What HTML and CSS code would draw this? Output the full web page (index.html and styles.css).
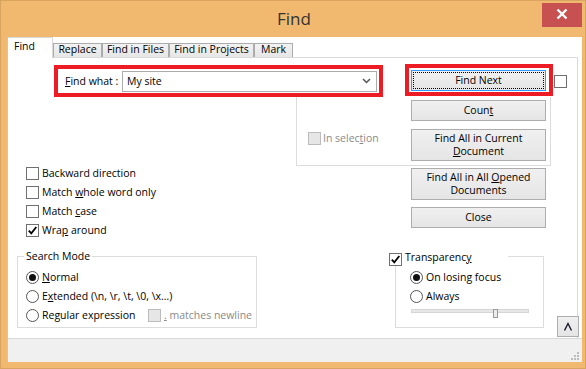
FILE: index.html
```html
<!DOCTYPE html>
<html lang="en">
<head>
<meta charset="utf-8">
<title>Find</title>
<link rel="stylesheet" href="styles.css">
</head>
<body>
<div class="window">
  <div class="titlebar">
    <div class="title">Find</div>
    <div class="close">
      <svg width="40" height="24" viewBox="0 0 40 24"><path d="M15.5 6.5 L24.5 15.5 M24.5 6.5 L15.5 15.5" stroke="#fff" stroke-width="2.4" fill="none"/></svg>
    </div>
  </div>
  <div class="client">
    <div class="tabs">
      <div class="tab active">Find</div>
      <div class="tab w-replace">Replace</div>
      <div class="tab w-files">Find in Files</div>
      <div class="tab w-projects">Find in Projects</div>
      <div class="tab w-mark">Mark</div>
    </div>
    <div class="panel">
      <div class="row-a">
        <div class="mark mark-what">
          <span class="what-label"><u>F</u>ind what :</span>
          <div class="combo">
            <span>My site</span>
            <svg class="chev" width="9" height="6" viewBox="0 0 9 6"><path d="M1 1 L4.5 4.5 L8 1" stroke="#555" stroke-width="1.5" fill="none"/></svg>
          </div>
        </div>
        <div class="mark mark-next">
          <button class="btn btn-next"><span class="focus-rect">Find Next</span></button>
        </div>
        <span class="cb cb-side"></span>
      </div>
      <div class="sel-group">
        <div class="sel-check"><span class="cb disabled"></span><span class="dim">In selec<u>t</u>ion</span></div>
        <div class="btn-col col-b">
          <button class="btn"><span class="lbl">Coun<u>t</u></span></button>
          <button class="btn tall"><span class="lbl">Find All in Current<br><u>D</u>ocument</span></button>
        </div>
      </div>
      <div class="row-c">
        <div class="checks">
          <div class="check-row"><span class="cb"></span><span>Backward direction</span></div>
          <div class="check-row"><span class="cb"></span><span>Match <u>w</u>hole word only</span></div>
          <div class="check-row"><span class="cb"></span><span>Match <u>c</u>ase</span></div>
          <div class="check-row"><span class="cb"><svg width="11" height="11" viewBox="0 0 11 11"><path d="M1.8 5.6 L4.3 8.3 L9.3 2" stroke="#000" stroke-width="1.8" fill="none"/></svg></span><span>Wra<u>p</u> around</span></div>
        </div>
        <div class="btn-col col-c">
          <button class="btn tall"><span class="lbl">Find All in All <u>O</u>pened<br>Documents</span></button>
          <button class="btn"><span class="lbl">Close</span></button>
        </div>
      </div>
      <div class="row-d">
        <fieldset class="group mode">
          <legend>Search Mode</legend>
          <div class="mode-body">
            <div class="radio-row"><span class="radio on"></span><span><u>N</u>ormal</span></div>
            <div class="radio-row"><span class="radio"></span><span>E<u>x</u>tended (\n, \r, \t, \0, \x…)</span></div>
            <div class="radio-row"><span class="radio"></span><span class="regex-label">Re<u>g</u>ular expression</span><span class="cb disabled"></span><span class="dim"><u>.</u> matches newline</span></div>
          </div>
        </fieldset>
        <fieldset class="group trans">
          <legend><span class="cb"><svg width="11" height="11" viewBox="0 0 11 11"><path d="M1.8 5.6 L4.3 8.3 L9.3 2" stroke="#000" stroke-width="1.8" fill="none"/></svg></span><span class="trans-label">Transparenc<u>y</u></span></legend>
          <div class="trans-body">
            <div class="radio-row"><span class="radio on"></span><span>On losing focus</span></div>
            <div class="radio-row"><span class="radio"></span><span>Always</span></div>
            <div class="slider"><div class="track"></div><div class="thumb"></div></div>
          </div>
        </fieldset>
        <button class="btn up"><svg width="20" height="19" viewBox="0 0 20 19"><path d="M6.5 13.5 L10 6.5 L13.5 13.5" stroke="#1b1b2e" stroke-width="1.4" fill="none"/></svg></button>
      </div>
    </div>
    <div class="status">
      <svg class="grip" width="10" height="10" viewBox="0 0 10 10"><g fill="#bdbdbd"><rect x="7" y="1" width="2" height="2"/><rect x="4" y="4" width="2" height="2"/><rect x="7" y="4" width="2" height="2"/><rect x="1" y="7" width="2" height="2"/><rect x="4" y="7" width="2" height="2"/><rect x="7" y="7" width="2" height="2"/></g></svg>
    </div>
  </div>
</div>
</body>
</html>
```

FILE: styles.css
```css
* { box-sizing: border-box; }
html, body { margin: 0; padding: 0; }
body {
  width: 586px;
  height: 369px;
  overflow: hidden;
  font-family: "Open Sans", "Noto Sans", sans-serif;
  font-size: 10.5px;
  line-height: 13px;
  color: #000;
}
u { text-underline-offset: 1px; }

.window {
  width: 586px;
  height: 369px;
  background: #f1b96f;
  box-shadow: inset 0 0 0 1px #d9a45f;
  display: flex;
  flex-direction: column;
}
.titlebar { height: 37px; display: grid; flex: none; }
.title {
  grid-area: 1 / 1;
  text-align: center;
  font-size: 17px;
  line-height: 38px;
  color: #333;
  padding-left: 2px;
}
.close {
  grid-area: 1 / 1;
  justify-self: end;
  align-self: start;
  margin: 3px 4px 0 0;
  width: 40px;
  height: 24px;
  background: #c75050;
}
.close svg { display: block; }

.client {
  margin-left: 7px;
  width: 575px;
  height: 325px;
  border-left: 1px solid #c6c6c6;
  background: #fff;
  display: flex;
  flex-direction: column;
}
.tabs { height: 20px; display: flex; align-items: flex-end; flex: none; }
.tab {
  height: 14px;
  border: 1px solid #acacac;
  border-bottom: none;
  background: linear-gradient(#f2f2f2, #e6e6e6);
  text-align: center;
  line-height: 11px;
  white-space: nowrap;
}
.tab.active {
  position: relative;
  z-index: 1;
  width: 45px;
  height: 21px;
  margin-bottom: -1px;
  border: none;
  border-top: 1px solid #d9d9d9;
  border-right: 1px solid #d9d9d9;
  background: #fff;
  text-align: left;
  padding: 2px 0 0 6px;
  line-height: 13px;
}
.w-replace { width: 49px; }
.w-files { width: 67px; }
.w-projects { width: 85px; }
.w-mark { width: 39px; }

.panel {
  flex: none;
  width: 570px;
  height: 281px;
  border-top: 1px solid #d9d9d9;
  border-right: 1px solid #d9d9d9;
}

/* row A */
.row-a { display: flex; align-items: flex-start; margin-top: 6px; height: 33px; }
.mark { border: 4px solid #ed1c24; flex: none; }
.mark-what {
  margin: 1px 0 0 46px;
  width: 329px;
  height: 32px;
  display: flex;
  align-items: center;
  padding-left: 7px;
}
.what-label { width: 57px; flex: none; }
.combo {
  width: 255px;
  height: 21px;
  border: 1px solid #acacac;
  display: flex;
  align-items: center;
  justify-content: space-between;
  padding: 0 5px 0 4px;
}
.chev { display: block; }
.mark-next { margin-left: 22px; width: 148px; height: 32px; padding: 2px 0 0 2px; }

.cb {
  width: 13px;
  height: 13px;
  border: 1px solid #707070;
  background: #fff;
  display: inline-flex;
  flex: none;
}
.cb svg { display: block; }
.cb.disabled { border-color: #bcbcbc; background: #e6e6e6; }
.cb-side { margin: 11px 0 0 1px; }
.dim { color: #8a8a8a; }

/* buttons */
.btn {
  font: inherit;
  color: #000;
  width: 135px;
  height: 21px;
  border: 1px solid #adadad;
  border-radius: 0;
  background: linear-gradient(#f0f0f0, #e5e5e5);
  padding: 0;
  margin: 0;
  display: flex;
  align-items: center;
  justify-content: center;
  text-align: center;
  line-height: 13px;
  flex: none;
}
.lbl { display: block; text-align: center; }
.btn.tall { height: 32px; }
.btn-next { border-color: #3399ff; padding: 1px; }
.focus-rect {
  align-self: stretch;
  flex: 1;
  border: 1px dotted #000;
  display: flex;
  align-items: center;
  justify-content: center;
}
.btn-col { display: flex; flex-direction: column; flex: none; }

/* selection group */
.sel-group {
  margin-left: 288px;
  width: 255px;
  height: 69px;
  border: 1px solid #dcdcdc;
  border-top: none;
  display: flex;
}
.sel-check {
  width: 114px;
  padding: 35px 0 0 11px;
  display: flex;
  align-items: flex-start;
  gap: 2px;
  flex: none;
}
.col-b { padding-top: 3px; gap: 8px; }

/* row C */
.row-c { display: flex; height: 84px; }
.checks { margin-left: 18px; width: 385px; padding-top: 1px; flex: none; }
.check-row { height: 19px; display: flex; align-items: flex-start; gap: 3px; white-space: nowrap; }
.col-c { padding-top: 2px; gap: 7px; }

/* row D */
.row-d { display: flex; align-items: flex-start; height: 88px; }
.group {
  margin: 0;
  padding: 0;
  border: 1px solid #dcdcdc;
  min-width: 0;
  height: 78px;
  flex: none;
}
.group legend { height: 13px; line-height: 13px; padding: 0; }
.mode { margin-left: 9px; width: 240px; }
.mode legend { margin-left: 6px; padding: 0 2px; }
.mode-body { padding: 5px 0 0 8px; }
.radio-row { height: 19px; display: flex; align-items: center; gap: 3px; white-space: nowrap; }
.radio {
  width: 13px;
  height: 13px;
  border: 1px solid #555;
  border-radius: 50%;
  background: #fff;
  display: flex;
  align-items: center;
  justify-content: center;
  flex: none;
}
.radio.on::after {
  content: "";
  width: 7px;
  height: 7px;
  border-radius: 50%;
  background: #111;
}
.regex-label { width: 103px; flex: none; }

.trans { margin-left: 138px; width: 149px; }
.trans legend {
  margin-left: -7px;
  width: 119px;
  display: flex;
  align-items: flex-start;
  background: #fff;
}
.trans legend .cb { margin-top: 3px; }
.trans-label { margin: 1px 0 0 3px; }
.trans-body { padding: 5px 0 0 14px; }
.slider { position: relative; width: 118px; height: 9px; margin: 3px 0 0 1px; }
.track {
  margin-top: 3px;
  height: 4px;
  background: #e7e7e7;
  border: 1px solid #d6d6d6;
}
.thumb {
  position: absolute;
  left: 82px;
  top: 0;
  width: 5px;
  height: 9px;
  border: 1px solid #9a9a9a;
  background: #ececec;
}
.up { width: 22px; height: 21px; margin: 66px 0 0 13px; }
.up svg { display: block; }

.status {
  flex: none;
  height: 24px;
  border-top: 1px solid #d9d9d9;
  background: #f0f0f0;
  display: flex;
  justify-content: flex-end;
  align-items: flex-end;
}
.grip { display: block; margin: 0 2px 1px 0; }
```
